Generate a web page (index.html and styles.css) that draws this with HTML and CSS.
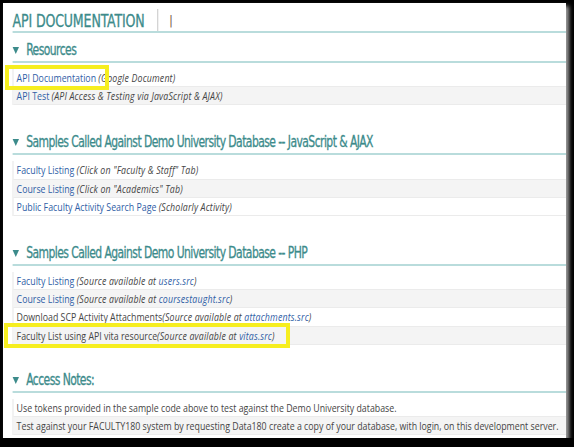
FILE: index.html
```html
<!DOCTYPE html>
<html lang="en">
<head>
  <meta charset="UTF-8" />
  <title>API Documentation</title>
  <link rel="stylesheet" href="styles.css">
</head>
<body>

  <div class="shot">
    <div class="page">
      <div class="title-bar">
        <h1>API DOCUMENTATION</h1>
        <span class="divider"></span>
        <span class="cursor">|</span>
      </div>

      <section class="block first">
        <h2><span class="arrow"></span>Resources</h2>
        <ul class="rows">
          <li><a href="#">API Documentation</a> <em>(Google Document)</em></li>
          <li><a href="#">API Test</a> <em>(API Access &amp; Testing via JavaScript &amp; AJAX)</em></li>
        </ul>
      </section>

      <section class="block">
        <h2><span class="arrow"></span>Samples Called Against Demo University Database -- JavaScript &amp; AJAX</h2>
        <ul class="rows">
          <li><a href="#">Faculty Listing</a> <em>(Click on "Faculty &amp; Staff" Tab)</em></li>
          <li><a href="#">Course Listing</a> <em>(Click on "Academics" Tab)</em></li>
          <li><a href="#">Public Faculty Activity Search Page</a> <em>(Scholarly Activity)</em></li>
        </ul>
      </section>

      <section class="block">
        <h2><span class="arrow"></span>Samples Called Against Demo University Database -- PHP</h2>
        <ul class="rows">
          <li><a href="#">Faculty Listing</a> <em>(Source available at <a href="#">users.src</a>)</em></li>
          <li><a href="#">Course Listing</a> <em>(Source available at <a href="#">coursestaught.src</a>)</em></li>
          <li>Download SCP Activity Attachments<em>(Source available at <a href="#">attachments.src</a>)</em></li>
          <li>Faculty List using API vita resource<em>(Source available at <a href="#">vitas.src</a>)</em></li>
        </ul>
      </section>

      <section class="block last">
        <h2><span class="arrow"></span>Access Notes:</h2>
        <ul class="rows">
          <li>Use tokens provided in the sample code above to test against the Demo University database.</li>
          <li>Test against your FACULTY180 system by requesting Data180 create a copy of your database, with login, on this development server.</li>
        </ul>
      </section>
    </div>

    <div class="mark mark-doc"></div>
    <div class="mark mark-vita"></div>
  </div>

</body>
</html>
```

FILE: styles.css
```css
* {
  box-sizing: border-box;
}
body {
  margin: 0;
  background: #000;
  font-family: 'Open Sans', 'DejaVu Sans', sans-serif;
}
.shot {
  position: relative;
  width: 563px;
  height: 435px;
  margin: 3px 0 0 3px;
  background: #fff;
  box-shadow: 3px 3px 4px rgba(170, 170, 170, 0.95);
  overflow: hidden;
}

/* the captured page is squeezed sideways */
.page {
  width: 704px;
  padding-left: 12px;
  transform: scaleX(0.8);
  transform-origin: 0 0;
}

.title-bar {
  display: flex;
  align-items: flex-end;
  height: 30px;
  border-bottom: 2px solid #b9dcdc;
}
.title-bar h1 {
  margin: 0;
  font-family: 'DejaVu Sans Condensed', 'DejaVu Sans', sans-serif;
  font-weight: normal;
  font-size: 17.5px;
  line-height: 20px;
  letter-spacing: -0.2px;
  color: #3c8b8b;
  -webkit-text-stroke: 0.3px #3c8b8b;
}
.divider {
  align-self: flex-end;
  width: 1px;
  height: 22px;
  margin-left: 16px;
  background: #b8b8b8;
}
.cursor {
  margin: 0 0 2px 14px;
  font-family: 'DejaVu Sans', sans-serif;
  font-size: 13px;
  line-height: 16px;
  color: #6e4236;
}

.block {
  margin-top: 26px;
}
.block.first {
  margin-top: 6px;
}
.block.last {
  margin-top: 24px;
}
.block h2 {
  display: flex;
  align-items: center;
  margin: 0;
  height: 24px;
  line-height: 22px;
  border-bottom: 2px solid #b9dcdc;
  font-family: 'DejaVu Sans Condensed', 'DejaVu Sans', sans-serif;
  font-weight: normal;
  font-size: 15px;
  letter-spacing: -0.7px;
  color: #3c8b8b;
  -webkit-text-stroke: 0.3px #3c8b8b;
}
.arrow {
  width: 0;
  height: 0;
  margin: 1px 9px 0 0;
  border-left: 4.5px solid transparent;
  border-right: 4.5px solid transparent;
  border-top: 7px solid #3c8b8b;
}

.rows {
  list-style: none;
  margin: 6px 0 0;
  padding: 0;
  border-left: 1px solid #dedede;
}
.rows li {
  padding-left: 4px;
  height: 18.2px;
  line-height: 17.2px;
  border-bottom: 1px solid #ebebeb;
  font-size: 11px;
  color: #454545;
  white-space: nowrap;
}
.rows li:nth-child(even) {
  background: #f4f4f4;
}
.rows a {
  color: #2f5ea6;
  text-decoration: none;
}
.rows em {
  color: #454545;
  letter-spacing: 0.2px;
}

.mark {
  position: absolute;
  border: 4px solid #f6ee1f;
}
.mark-doc {
  left: 2px;
  top: 62px;
  width: 104px;
  height: 25px;
}
.mark-vita {
  left: 1px;
  top: 320px;
  width: 286px;
  height: 25px;
}
```
